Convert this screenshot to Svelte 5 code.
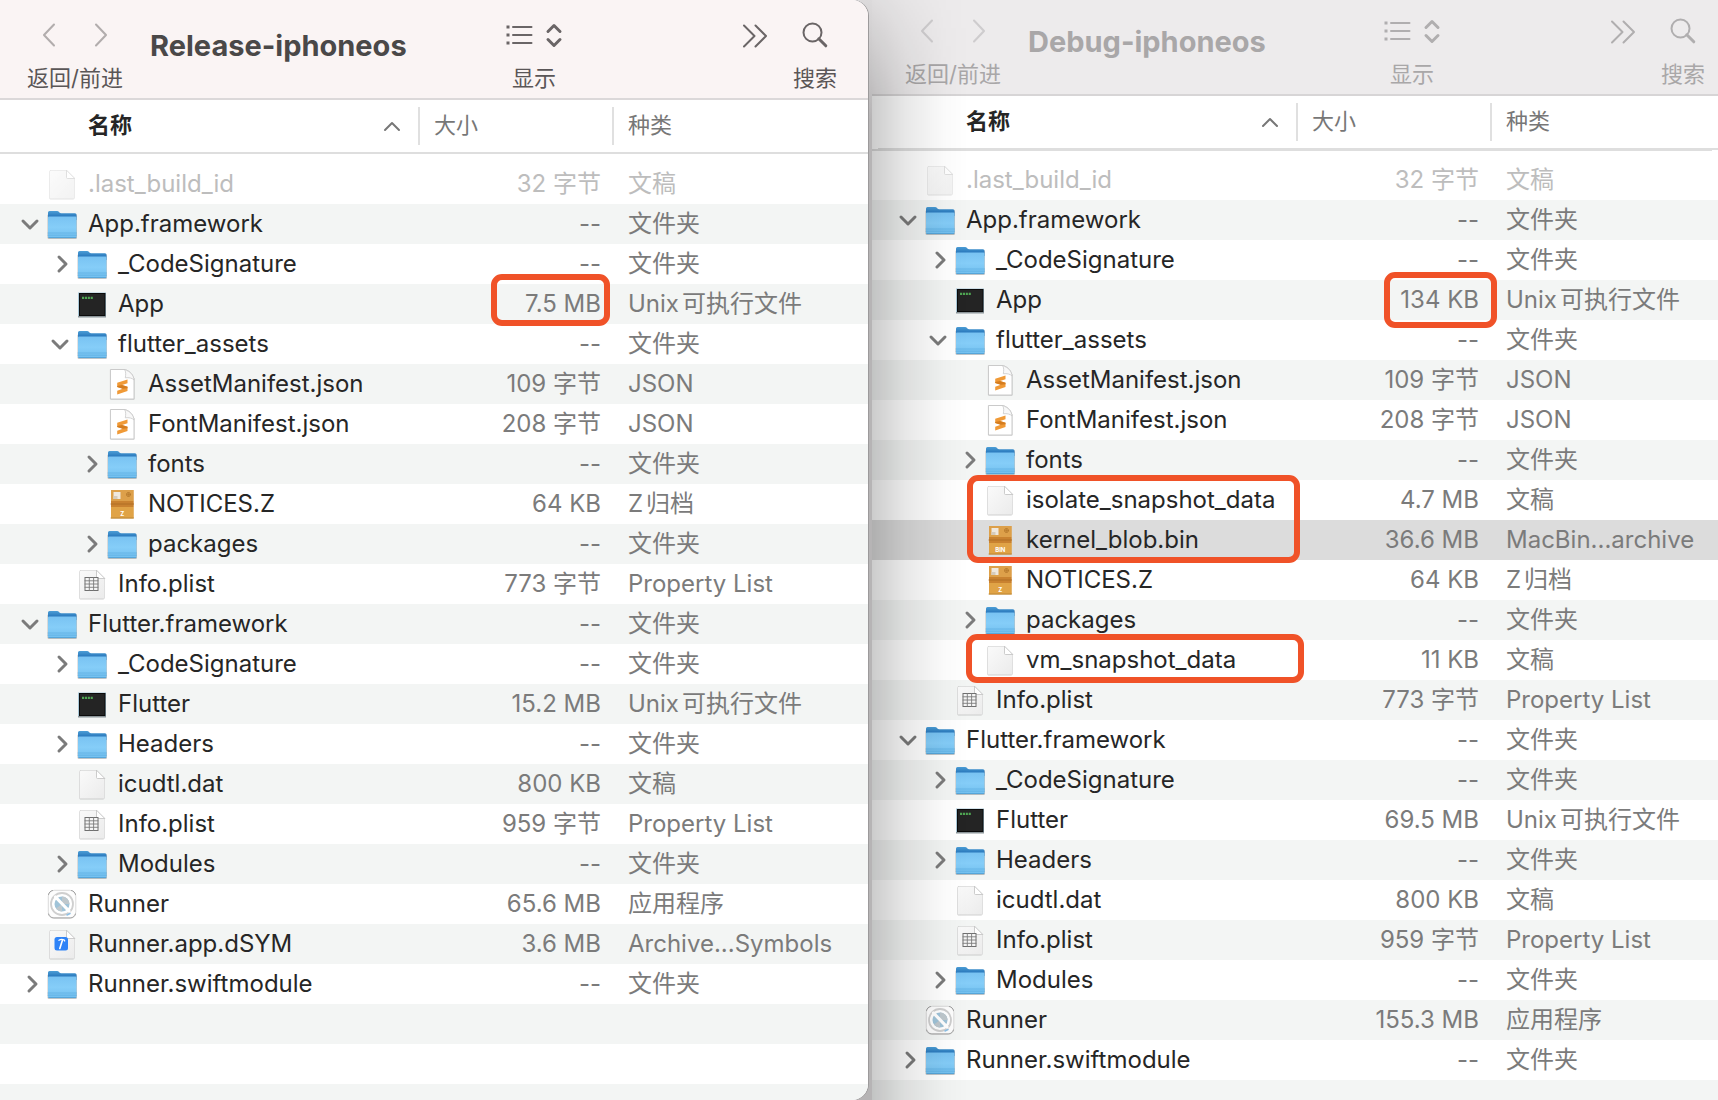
<script>
  const folder = (name, level, open = false) => ({ name, level, icon: 'folder', toggle: open ? 'open' : 'closed', size: '--', kind: '文件夹' });
  const file = (name, level, icon, size, kind, extra = {}) => ({ name, level, icon, size, kind, ...extra });

  const windows = [
    {
      title: 'Release-iphoneos',
      state: 'front',
      rows: [
        file('.last_build_id', 0, 'doc', '32 字节', '文稿', { dim: true }),
        folder('App.framework', 0, true),
        folder('_CodeSignature', 1),
        file('App', 1, 'exec', '7.5 MB', 'Unix可执行文件'),
        folder('flutter_assets', 1, true),
        file('AssetManifest.json', 2, 'json', '109 字节', 'JSON'),
        file('FontManifest.json', 2, 'json', '208 字节', 'JSON'),
        folder('fonts', 2),
        file('NOTICES.Z', 2, 'box', '64 KB', 'Z归档', { badge: 'Z' }),
        folder('packages', 2),
        file('Info.plist', 1, 'plist', '773 字节', 'Property List'),
        folder('Flutter.framework', 0, true),
        folder('_CodeSignature', 1),
        file('Flutter', 1, 'exec', '15.2 MB', 'Unix可执行文件'),
        folder('Headers', 1),
        file('icudtl.dat', 1, 'doc', '800 KB', '文稿'),
        file('Info.plist', 1, 'plist', '959 字节', 'Property List'),
        folder('Modules', 1),
        file('Runner', 0, 'app', '65.6 MB', '应用程序'),
        file('Runner.app.dSYM', 0, 'dsym', '3.6 MB', 'Archive...Symbols'),
        folder('Runner.swiftmodule', 0)
      ],
      marks: ['release-app']
    },
    {
      title: 'Debug-iphoneos',
      state: 'back',
      rows: [
        file('.last_build_id', 0, 'doc', '32 字节', '文稿', { dim: true }),
        folder('App.framework', 0, true),
        folder('_CodeSignature', 1),
        file('App', 1, 'exec', '134 KB', 'Unix可执行文件'),
        folder('flutter_assets', 1, true),
        file('AssetManifest.json', 2, 'json', '109 字节', 'JSON'),
        file('FontManifest.json', 2, 'json', '208 字节', 'JSON'),
        folder('fonts', 2),
        file('isolate_snapshot_data', 2, 'doc', '4.7 MB', '文稿'),
        file('kernel_blob.bin', 2, 'box', '36.6 MB', 'MacBin...archive', { badge: 'BIN', selected: true }),
        file('NOTICES.Z', 2, 'box', '64 KB', 'Z归档', { badge: 'Z' }),
        folder('packages', 2),
        file('vm_snapshot_data', 2, 'doc', '11 KB', '文稿'),
        file('Info.plist', 1, 'plist', '773 字节', 'Property List'),
        folder('Flutter.framework', 0, true),
        folder('_CodeSignature', 1),
        file('Flutter', 1, 'exec', '69.5 MB', 'Unix可执行文件'),
        folder('Headers', 1),
        file('icudtl.dat', 1, 'doc', '800 KB', '文稿'),
        file('Info.plist', 1, 'plist', '959 字节', 'Property List'),
        folder('Modules', 1),
        file('Runner', 0, 'app', '155.3 MB', '应用程序'),
        folder('Runner.swiftmodule', 0)
      ],
      marks: ['debug-app', 'debug-kernel', 'debug-vm']
    }
  ];
</script>

{#snippet sheet()}
  <path d="M4 3.500h17l7 7.500v19.500a1 1 0 0 1-1 1H4.500a1 1 0 0 1-1-1V4.500a1 1 0 0 1 .5-1z" fill="#000" opacity=".14" />
  <path d="M4.500 2.500H20.500L28.500 10.500V30a.8.8 0 0 1-.8.8H4.300a.8.8 0 0 1-.8-.8V3.500a1 1 0 0 1 1-1z" fill="url(#paper)" stroke="#d6d6d6" stroke-width=".7" />
  <path d="M20.500 2.500V9.500a1 1 0 0 0 1 1h7z" fill="#fff" stroke="#c0c0c0" stroke-width=".8" />
{/snippet}

{#snippet fileIcon(icon, badge)}
  <svg class="icon" viewBox="0 0 32 32" aria-hidden="true">
    {#if icon === 'folder'}
      <rect x="1.500" y="6" width="29.500" height="25" rx="1.500" fill="#000" opacity=".22" />
      <path d="M2 4.500a1.500 1.500 0 0 1 1.500-1.500h7.500c2 0 2.500 2.300 4.200 2.300h13.800a1.500 1.500 0 0 1 1.500 1.500V12H2z" fill="url(#folderBack)" />
      <path d="M2 9.500a1 1 0 0 1 1-1h26.500a1 1 0 0 1 1 1V28.500a1.500 1.500 0 0 1-1.500 1.500H3.500A1.500 1.500 0 0 1 2 28.500z" fill="url(#folderFront)" />
      <path d="M2 25h28.500M2 27.200h28.500" stroke="#5fb0e2" stroke-width=".8" />
      <path d="M2.800 29.600h27" stroke="#4a9bd0" stroke-width=".8" />
    {:else if icon === 'exec'}
      <rect x="2" y="4.500" width="28" height="24.500" fill="#a9c8d8" />
      <rect x="2" y="28" width="28" height="1.500" fill="#8c9599" />
      <rect x="3" y="5" width="26.500" height="23" fill="#0b0b0b" />
      <rect x="4" y="6" width="24.500" height="21" fill="#242424" />
      <path d="M6 9.800h10.800" stroke="#4fa653" stroke-width="2.200" stroke-dasharray="2.100 .8" class="flat" />
    {:else if icon === 'box'}
      <rect x="5" y="2" width="22.500" height="28.500" fill="#d9983f" />
      <rect x="5" y="2" width="22.500" height="11" fill="#dda04a" />
      <rect x="5" y="13" width="22.500" height="6" fill="#c98230" />
      <path d="M5 16h22.500" stroke="#b06f24" stroke-width="1" />
      <rect x="5" y="19" width="22.500" height="11" fill="#e0a346" />
      <rect x="7.500" y="4" width="7" height="7" fill="#efe8de" />
      <rect x="7.500" y="8" width="4" height="3" fill="#d6cbbb" />
      <circle cx="22.500" cy="6.500" r="2" fill="none" stroke="#b77b2e" />
      <path d="M22.500 5v3M21 6.500h3" stroke="#b77b2e" stroke-width=".7" />
      <path d="M5 30h22.500" stroke="#b5812f" stroke-width=".8" />
      <text x="16.300" y="28" class="badge">{badge}</text>
    {:else if icon === 'json'}
      <path d="M4.500 2.700h17l7 7.500v21.500H4.500z" fill="#000" opacity=".14" />
      <path d="M4.800 1.500h14.500c5.200 2 8.200 5.500 8.700 10.500v19H4.800z" fill="#fff" stroke="#c4c4c4" stroke-width=".9" />
      <path d="M18.500 1.500c1.800 2 1.200 5.500.8 8.300 3.500-.5 7 .2 8.700 2.200C27.500 7 24.500 3.500 18.500 1.500z" fill="#f8f8f8" stroke="#c9c9c9" stroke-width=".8" />
      <path d="M11.200 14.800l10.300-3.300v3.700l-5.500 1.900 5.500 1.700v4.100l-10.300 3.500v-3.700l5.500-1.900-5.500-1.800z" fill="#f09a37" class="flat" />
      <path d="M11.200 18.900v-1l4.800-.8 5.500 1.700v1.400l-4.800.6z" fill="#d57d1f" />
    {:else if icon === 'app'}
      <rect x="2.300" y="2.300" width="27.500" height="27.500" rx="6" fill="#fdfdfd" stroke="#d2d2d2" stroke-width=".8" />
      <path d="M2.500 6.500c.5-2 2-3.700 4-4M29.500 6.500c-.5-2-2-3.700-4-4M2.500 26c.5 2.200 2.500 4 5 4h17c2.500 0 4.500-1.800 5-4" fill="none" stroke="#979797" stroke-width=".9" />
      <circle cx="16" cy="16" r="11" fill="#fff" stroke="#cfcfcf" stroke-width="1.800" />
      <circle cx="16" cy="16" r="7.500" fill="#9fc3d8" />
      <path d="M16 8.500a7.500 7.500 0 0 1 7.500 7.500H16zM16 23.500a7.500 7.500 0 0 1-6-3l6-4.500z" fill="#bfc8cd" />
      <path d="M9.500 9l13.500 14" stroke="#fff" stroke-width="3.200" />
      <path d="M21 27l3-1.500" stroke="#8dc0e6" stroke-width="1.500" />
    {:else}
      {@render sheet()}
      {#if icon === 'plist'}
        <rect x="9" y="9.500" width="13" height="13" fill="#f6f6f6" stroke="#707070" />
        <path d="M9 12.800h13M9 16h13M9 19.300h13M13.300 9.500v13M17.600 9.500v13" stroke="#7c7c7c" stroke-width=".9" />
      {:else if icon === 'dsym'}
        <rect x="8.500" y="9" width="13.500" height="13.500" rx="2.500" fill="#2f83f7" />
        <path d="M13.800 20.500l2.700-8.500" stroke="#fff" stroke-width="1.600" />
        <path d="M13 12.300c1.500-1 3-1.200 5.300-.3l.4 1" stroke="#fff" stroke-width="1.300" fill="none" />
      {/if}
    {/if}
  </svg>
{/snippet}

<svg class="defs" width="0" height="0" aria-hidden="true">
  <defs>
    <linearGradient id="paper" x1="0" y1="0" x2="1" y2="1">
      <stop offset="0" stop-color="#fafafa" />
      <stop offset="1" stop-color="#ebebeb" />
    </linearGradient>
    <linearGradient id="folderBack" x1="0" y1="0" x2="0" y2="1">
      <stop offset="0" stop-color="#4c9ed6" />
      <stop offset=".6" stop-color="#2a79bd" />
    </linearGradient>
    <linearGradient id="folderFront" x1="0" y1="0" x2="0" y2="1">
      <stop offset="0" stop-color="#79c3f2" />
      <stop offset=".5" stop-color="#85cdf8" />
      <stop offset="1" stop-color="#72c0ef" />
    </linearGradient>
  </defs>
</svg>

<main class="desktop">
  {#each windows as win}
    <section class="window {win.state}" aria-label={win.title}>
      <header class="toolbar">
        <div class="group nav">
          <div class="tools">
            <button aria-label="返回"><svg width="14" height="24" viewBox="0 0 14 24"><path d="M12 1.500L2 12l10 10.500" /></svg></button>
            <button aria-label="前进"><svg width="14" height="24" viewBox="0 0 14 24"><path d="M2 1.500L12 12 2 22.500" /></svg></button>
          </div>
          <span>返回/前进</span>
        </div>
        <h1>{win.title}</h1>
        <div class="group view">
          <button class="tools" aria-label="显示">
            <svg width="26" height="24" viewBox="0 0 26 24"><path d="M7 4h18.500M7 12h18.500M7 20h18.500" /><path d="M.5 4h3M.5 12h3M.5 20h3" class="dots" /></svg>
            <svg width="16" height="24" viewBox="0 0 16 24" class="bold"><path d="M2 8.500l6-6 6 6M2 16.500l6 6 6-6" /></svg>
          </button>
          <span>显示</span>
        </div>
        <button class="tools more" aria-label="更多"><svg width="26" height="24" viewBox="0 0 26 24"><path d="M3 2.500l10.500 10.500L3 23.500M14.500 2.500L25 13 14.500 23.500" /></svg></button>
        <div class="group search">
          <button class="tools" aria-label="搜索"><svg width="26" height="24" viewBox="0 0 26 24"><circle cx="10.500" cy="9.500" r="9" /><path d="M16.800 15.800l7 7" class="handle" /></svg></button>
          <span>搜索</span>
        </div>
      </header>

      <table>
        <colgroup>
          <col class="c-name" />
          <col class="c-size" />
          <col />
        </colgroup>
        <thead>
          <tr>
            <th class="sorted" aria-sort="ascending">
              <button><span>名称</span> <svg width="16" height="10" viewBox="0 0 16 10"><path d="M1 9l7-7 7 7" /></svg></button>
            </th>
            <th><button><span>大小</span></button></th>
            <th><button><span>种类</span></button></th>
          </tr>
        </thead>
        <tbody>
          {#each win.rows as row}
            <tr class:dim={row.dim} class:selected={row.selected}>
              <td>
                <div class="name level-{row.level}">
                  {#if row.toggle}
                    <button class="toggle" aria-label={row.name} aria-expanded={row.toggle === 'open'}>
                      <svg width="18" height="18" viewBox="0 0 18 18">
                        {#if row.toggle === 'open'}
                          <path d="M2 6l7 7 7-7" />
                        {:else}
                          <path d="M8 2l7 7-7 7" />
                        {/if}
                      </svg>
                    </button>
                  {:else}
                    <span class="toggle"></span>
                  {/if}
                  {@render fileIcon(row.icon, row.badge)}
                  <span>{row.name}</span>
                </div>
              </td>
              <td class="size">{row.size}</td>
              <td class="kind">{row.kind}</td>
            </tr>
          {/each}
        </tbody>
      </table>
      <div class="stripes"></div>
      {#each win.marks as mark}
        <div class="mark {mark}"></div>
      {/each}
    </section>
  {/each}
</main>

<style>
  :global(body) {
    margin: 0;
  }
  .defs {
    position: absolute;
  }
  .desktop {
    display: grid;
    grid-template-columns: 872fr 846fr;
    min-height: 100vh;
    background: linear-gradient(#dcdadb, #b6b4b5 120px);
    font-family: Inter, 'Noto Sans CJK SC', sans-serif;
    font-size: 24px;
    color: #262626;
  }
  .window {
    position: relative;
    display: flex;
    flex-direction: column;
    box-sizing: border-box;
    background: #fff;
    overflow: hidden;
  }
  .front {
    margin-right: 4px;
    border-radius: 0 16px 16px 0;
    box-shadow: 1px 0 0 #9c9a9b;
  }
  .back::after {
    content: '';
    position: absolute;
    inset: 0 auto 0 0;
    width: 96px;
    background: linear-gradient(to right, rgba(0, 0, 0, 0.2), rgba(0, 0, 0, 0.09) 35%, rgba(0, 0, 0, 0.02) 75%, transparent);
    mask-image: linear-gradient(to bottom, rgba(0, 0, 0, 0.3), #000 100px);
    pointer-events: none;
  }
  button {
    padding: 0;
    border: 0;
    background: none;
    font: inherit;
    color: inherit;
  }
  svg {
    display: block;
    flex: none;
    overflow: visible;
  }
  path,
  circle {
    stroke-linecap: round;
    stroke-linejoin: round;
  }
  .flat {
    stroke-linecap: butt;
  }

  .toolbar {
    display: flex;
    align-items: flex-start;
    box-sizing: border-box;
    height: 100px;
    padding: 23px 31px 0 26px;
    border-bottom: 2px solid #dbd8d9;
    background: #faf4f4;
    color: #5a5657;
    font-size: 22px;
    line-height: 30px;
  }
  .back .toolbar {
    height: 96px;
    padding: 19px 13px 0 32px;
    border-bottom-color: #d7d5d6;
    background: #edebec;
    color: #a9a7a8;
  }
  .toolbar svg {
    fill: none;
    stroke: #6a6566;
    stroke-width: 2;
  }
  .back .toolbar svg {
    stroke: #b0aeaf;
  }
  .toolbar .dots {
    stroke-width: 3;
    stroke-linecap: butt;
  }
  .toolbar .bold,
  .toolbar .handle {
    stroke-width: 3;
  }
  .group {
    display: flex;
    flex-direction: column;
    align-items: center;
    gap: 16px;
    white-space: nowrap;
    text-autospace: normal;
  }
  .tools {
    display: flex;
    align-items: center;
    height: 24px;
  }
  .nav {
    width: 98px;
  }
  .nav .tools {
    gap: 38px;
  }
  .nav svg,
  .back .toolbar .nav svg {
    opacity: 0.5;
  }
  h1 {
    width: 352px;
    margin: 3px 0 0 26px;
    font-size: 29px;
    line-height: 40px;
    font-weight: 700;
    color: #4a4848;
  }
  .back h1 {
    color: #a9a7a8;
  }
  .view {
    width: 64px;
  }
  .view .tools {
    gap: 14px;
  }
  .more {
    margin-left: auto;
    margin-right: 26px;
  }
  .search {
    width: 44px;
  }

  table {
    width: 100%;
    table-layout: fixed;
    border-collapse: collapse;
  }
  .back table {
    margin-left: 6px;
    width: calc(100% - 6px);
  }
  .back thead tr {
    box-shadow: -6px 0 0 #fff, -6px 2px 0 #dedede;
  }
  .c-name {
    width: 418px;
  }
  .c-size {
    width: 194px;
  }
  th {
    height: 52px;
    padding: 0;
    border-bottom: 2px solid #dedede;
    font-size: 22px;
    font-weight: 400;
    color: #777;
    text-align: left;
  }
  th button {
    display: flex;
    align-items: center;
    justify-content: space-between;
    box-sizing: border-box;
    width: 100%;
    height: 38px;
    padding: 0 0 0 14px;
    border-left: 2px solid #e0e0e0;
  }
  th span {
    padding-bottom: 7px;
  }
  th.sorted button {
    padding: 0 18px 0 88px;
    border-left: 0;
    font-weight: 600;
    color: #262626;
  }
  th svg {
    fill: none;
    stroke: #777;
    stroke-width: 2;
  }
  tbody::before {
    content: '';
    display: block;
    height: 10px;
  }
  td {
    height: 40px;
    padding: 0;
    line-height: 38px;
    white-space: nowrap;
  }
  tbody tr:nth-child(even) {
    background: #f3f5f4;
    box-shadow: -6px 0 0 #f3f5f4;
  }
  tbody tr.selected {
    background: #dcdcdc;
    box-shadow: -6px 0 0 #dcdcdc;
  }
  .name {
    display: flex;
    align-items: center;
    height: 40px;
    padding-left: 21px;
  }
  .name.level-1 {
    padding-left: 51px;
  }
  .name.level-2 {
    padding-left: 81px;
  }
  .toggle {
    width: 25px;
    flex: none;
  }
  .toggle svg {
    fill: none;
    stroke: #7b7b7b;
    stroke-width: 3;
  }
  .icon {
    width: 32px;
    height: 32px;
    margin-right: 10px;
  }
  .badge {
    font-size: 6px;
    font-weight: 700;
    fill: #fff;
    text-anchor: middle;
  }
  .size,
  .kind {
    color: #7b7b7b;
  }
  .size {
    padding-right: 11px;
    text-align: right;
  }
  .kind {
    padding-left: 16px;
    text-autospace: normal;
  }
  .dim td {
    color: #bdbdbd;
  }
  .dim .icon {
    opacity: 0.6;
  }
  .stripes {
    flex: 1;
    background: repeating-linear-gradient(#f3f5f4 0 40px, #fff 40px 80px);
  }

  .mark {
    position: absolute;
    box-sizing: border-box;
    border: 6px solid #f05228;
    border-radius: 11px;
    pointer-events: none;
    z-index: 1;
  }
  .release-app {
    left: 491px;
    top: 274px;
    width: 119px;
    height: 52px;
  }
  .debug-app {
    left: 512px;
    top: 272px;
    width: 113px;
    height: 56px;
  }
  .debug-kernel {
    left: 95px;
    top: 475px;
    width: 333px;
    height: 88px;
  }
  .debug-vm {
    left: 94px;
    top: 634px;
    width: 338px;
    height: 49px;
  }
</style>
